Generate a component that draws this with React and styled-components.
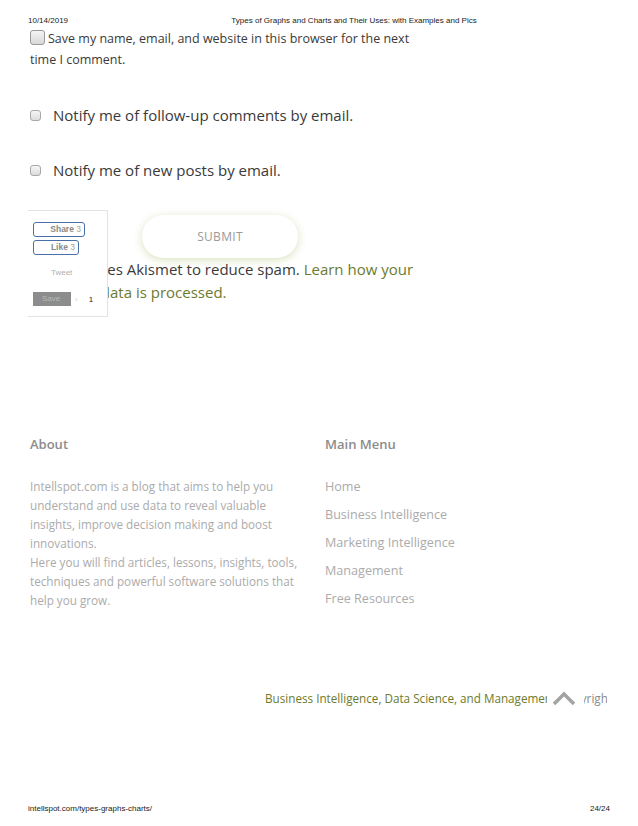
import React from 'react'
import styled, { createGlobalStyle } from 'styled-components'

const GlobalStyle = createGlobalStyle`
    body {
        margin: 0;
        background: #ffffff;
    }
`

const Page = styled.div`
    width: 638px;
    height: 826px;
    display: flex;
    flex-direction: column;
    background: #fff;
    font-family: "Open Sans", "Liberation Sans", sans-serif;
    overflow: hidden;
`

const PrintBar = styled.div`
    display: flex;
    justify-content: space-between;
    align-items: center;
    padding: 0 28px;
    height: ${props => props.height}px;
    font-family: "Liberation Sans", Arial, sans-serif;
    font-size: 8px;
    color: #222;
`
const PrintTitle = styled.span`
    flex: 1;
    text-align: center;
    padding-left: 30px;
`

const Content = styled.div`
    padding-left: 30px;
    color: #3a3a3a;
`

const SaveRow = styled.div`
    width: 385px;
    margin-top: -12px;
    font-size: 12.5px;
    line-height: 21px;
`
const BigCheck = styled.span`
    display: inline-block;
    width: 13px;
    height: 13px;
    margin-right: 3px;
    vertical-align: -2px;
    border: 1px solid #9a9a9a;
    border-radius: 3px;
    background: linear-gradient(#f4f4f4, #d8d8d8);
`

const NotifyRow = styled.div`
    display: flex;
    align-items: center;
    font-size: 15px;
    margin-top: ${props => props.top}px;
    height: 22px;
`
const SmallCheck = styled.span`
    width: 9px;
    height: 9px;
    margin-right: 12px;
    border: 1px solid #a8a8a8;
    border-radius: 3px;
    background: linear-gradient(#f6f6f6, #dcdcdc);
`

const FormEnd = styled.div`
    position: relative;
    margin-top: 34px;
`
const SubmitButton = styled.button`
    display: block;
    margin-left: 112px;
    width: 156px;
    height: 43px;
    border: none;
    border-radius: 22px;
    background: #fff;
    box-shadow: 0 2px 9px rgba(170, 190, 110, 0.45);
    font-family: "Open Sans", sans-serif;
    font-size: 12px;
    letter-spacing: 0.3px;
    color: #9a9a9a;
`
const Akismet = styled.p`
    margin: 0;
    width: 390px;
    font-size: 15px;
    line-height: 23px;
    a {
        color: #6c7a2e;
        text-decoration: none;
    }
`

const ShareBox = styled.div`
    position: absolute;
    left: -2px;
    top: -5px;
    width: 79px;
    height: 105px;
    border: 1px solid #e3e3e3;
    border-left: none;
    background: #fff;
    font-family: "Liberation Sans", Arial, sans-serif;
    font-size: 8px;
`
const ShareButton = styled.div`
    position: absolute;
    left: 5px;
    top: ${props => props.top}px;
    width: ${props => props.width}px;
    height: 15px;
    border: 1px solid #4a6ea8;
    border-radius: 3px;
    box-sizing: border-box;
    text-align: right;
    padding-right: 3px;
    line-height: 13px;
    font-size: 8.5px;
    font-weight: bold;
    color: #8a8a8a;
    b {
        font-weight: normal;
        color: #a0a0a0;
    }
`
const TweetLabel = styled.div`
    position: absolute;
    left: 23px;
    top: 57px;
    color: #b0b0b0;
`
const SaveRowBox = styled.div`
    position: absolute;
    left: 5px;
    top: 81px;
    display: flex;
    align-items: center;
    height: 14px;
`
const SaveButton = styled.span`
    width: 38px;
    height: 14px;
    background: #8c8c8c;
    color: #b8b8b8;
    line-height: 14px;
    padding-left: 9px;
    box-sizing: border-box;
`
const Count = styled.span`
    margin-left: 4px;
    color: #d0d0d0;
    span {
        margin-left: 11px;
        color: #222;
    }
`

const Footer = styled.div`
    display: grid;
    grid-template-columns: 295px 280px;
    padding-left: 30px;
    margin-top: 131px;
`
const FooterHead = styled.h4`
    margin: 0;
    font-size: 13px;
    font-weight: 600;
    color: #8c8c8c;
    line-height: 18px;
`
const AboutText = styled.p`
    margin: 24px 0 0;
    width: 278px;
    font-size: 11.7px;
    line-height: 19px;
    color: #ababab;
`
const MenuList = styled.ul`
    list-style: none;
    margin: 24px 0 0;
    padding: 0;
`
const MenuItem = styled.li`
    font-size: 12.6px;
    line-height: 19px;
    margin-bottom: 9px;
    color: #ababab;
`

const CopyBar = styled.div`
    position: relative;
    margin-top: 71px;
    margin-left: 265px;
    width: 342px;
    height: 20px;
    overflow: hidden;
    white-space: nowrap;
    font-size: 11.7px;
    line-height: 20px;
    color: #6c7a2e;
    span {
        color: #8a8a8a;
    }
`
const TopButton = styled.div`
    position: absolute;
    left: 282px;
    top: 0;
    width: 37px;
    height: 20px;
    padding-right: 3px;
    box-sizing: border-box;
    background: #fff;
    display: flex;
    align-items: center;
    justify-content: center;
`

export default function App () {
    return (
        <Page>
            <GlobalStyle />
            <PrintBar height={40}>
                <span>10/14/2019</span>
                <PrintTitle>Types of Graphs and Charts and Their Uses: with Examples and Pics</PrintTitle>
            </PrintBar>
            <Content>
                <SaveRow>
                    <BigCheck />Save my name, email, and website in this browser for the next time I comment.
                </SaveRow>
                <NotifyRow top={34}>
                    <SmallCheck />Notify me of follow-up comments by email.
                </NotifyRow>
                <NotifyRow top={33}>
                    <SmallCheck />Notify me of new posts by email.
                </NotifyRow>
                <FormEnd>
                    <SubmitButton>SUBMIT</SubmitButton>
                    <Akismet>
                        This site uses Akismet to reduce spam. <a href="#">Learn how your comment data is processed.</a>
                    </Akismet>
                    <ShareBox>
                        <ShareButton top={11} width={52}>Share <b>3</b></ShareButton>
                        <ShareButton top={29} width={46}>Like <b>3</b></ShareButton>
                        <TweetLabel>Tweet</TweetLabel>
                        <SaveRowBox>
                            <SaveButton>Save</SaveButton>
                            <Count>&#8249;<span>1</span></Count>
                        </SaveRowBox>
                    </ShareBox>
                </FormEnd>
            </Content>
            <Footer>
                <div>
                    <FooterHead>About</FooterHead>
                    <AboutText>
                        Intellspot.com is a blog that aims to help you understand and use data to reveal valuable insights, improve decision making and boost innovations.
                        <br />
                        Here you will find articles, lessons, insights, tools, techniques and powerful software solutions that help you grow.
                    </AboutText>
                </div>
                <div>
                    <FooterHead>Main Menu</FooterHead>
                    <MenuList>
                        <MenuItem>Home</MenuItem>
                        <MenuItem>Business Intelligence</MenuItem>
                        <MenuItem>Marketing Intelligence</MenuItem>
                        <MenuItem>Management</MenuItem>
                        <MenuItem>Free Resources</MenuItem>
                    </MenuList>
                </div>
            </Footer>
            <CopyBar>
                Business Intelligence, Data Science, and Management <span>Copyright</span>
                <TopButton>
                    <svg width="24" height="16" viewBox="0 0 24 16">
                        <polyline points="2,14 12,4 22,14" fill="none" stroke="#a3a3a3" strokeWidth="3.5" />
                    </svg>
                </TopButton>
            </CopyBar>
            <PrintBar height={24} style={{marginTop: 'auto', marginBottom: 6}}>
                <span>intellspot.com/types-graphs-charts/</span>
                <span>24/24</span>
            </PrintBar>
        </Page>
    )
}
